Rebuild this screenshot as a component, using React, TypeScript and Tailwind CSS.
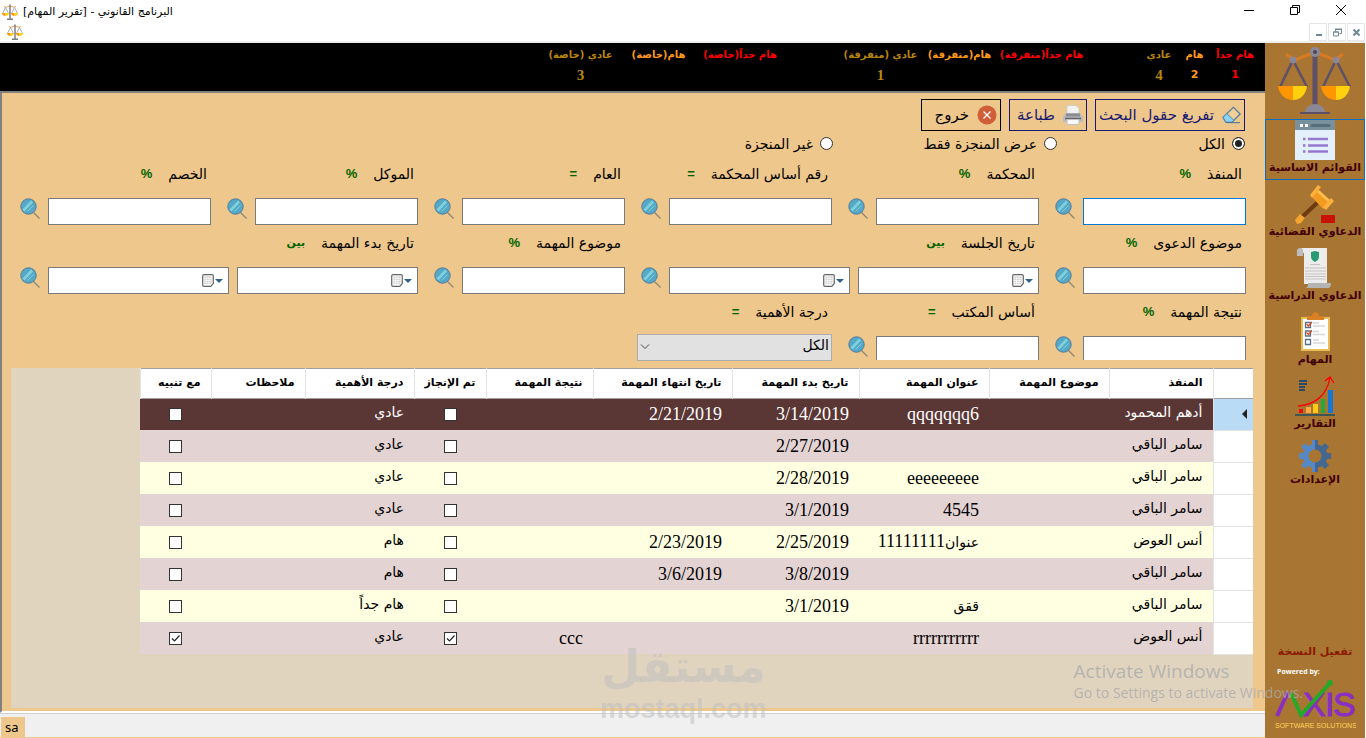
import React from 'react';

interface Counter {
  label: string;
  value: string;
  labelClass: string;
  valueClass: string;
}

interface Task {
  executor: string;
  title: string;
  start: string;
  end: string;
  result: string;
  done: boolean;
  priority: string;
  alert: boolean;
}

const red = 'text-[#ff0000]';
const orange = 'text-[#ff9a1a]';
const gold = 'text-[#b8860b]';

const counterGroups: Counter[][] = [
  [
    { label: 'هام جداً', value: '1', labelClass: `w-[36px] ${red}`, valueClass: `text-[11px] ${red}` },
    { label: 'هام', value: '2', labelClass: `w-[17px] ${orange}`, valueClass: `text-[11px] ${orange}` },
    { label: 'عادي', value: '4', labelClass: `w-[26px] ${gold}`, valueClass: `font-['Liberation_Serif'] text-[15px] ${gold}` },
  ],
  [
    { label: 'هام جداً(متفرقة)', value: '', labelClass: `w-[79px] ${red}`, valueClass: '' },
    { label: 'هام(متفرقة)', value: '', labelClass: `w-[57px] ${orange}`, valueClass: '' },
    { label: 'عادي (متفرقة)', value: '1', labelClass: `w-[73px] ${gold}`, valueClass: `font-['Liberation_Serif'] text-[15px] ${gold}` },
  ],
  [
    { label: 'هام جداً(خاصة)', value: '', labelClass: `w-[78px] ${red}`, valueClass: '' },
    { label: 'هام(خاصة)', value: '', labelClass: `w-[57px] ${orange}`, valueClass: '' },
    { label: 'عادي (خاصة)', value: '3', labelClass: `w-[71px] ${gold}`, valueClass: `font-['Liberation_Serif'] text-[15px] ${gold}` },
  ],
];

const columns = [
  { label: 'المنفذ', width: 'w-[104px]' },
  { label: 'موضوع المهمة', width: 'w-[120px]' },
  { label: 'عنوان المهمة', width: 'w-[130px]' },
  { label: 'تاريخ بدء المهمة', width: 'w-[127px]' },
  { label: 'تاريخ انتهاء المهمة', width: 'w-[139px]' },
  { label: 'نتيجة المهمة', width: 'w-[107px]' },
  { label: 'تم الإنجاز', width: 'w-[72px]' },
  { label: 'درجة الأهمية', width: 'w-[109px]' },
  { label: 'ملاحظات', width: 'w-[94px]' },
  { label: 'مع تنبيه', width: 'w-[71px]' },
];

const tasks: Task[] = [
  { executor: 'أدهم المحمود', title: 'qqqqqqq6', start: '3/14/2019', end: '2/21/2019', result: '', done: false, priority: 'عادي', alert: false },
  { executor: 'سامر الباقي', title: '', start: '2/27/2019', end: '', result: '', done: false, priority: 'عادي', alert: false },
  { executor: 'سامر الباقي', title: 'eeeeeeeee', start: '2/28/2019', end: '', result: '', done: false, priority: 'عادي', alert: false },
  { executor: 'سامر الباقي', title: '4545', start: '3/1/2019', end: '', result: '', done: false, priority: 'عادي', alert: false },
  { executor: 'أنس العوض', title: 'عنوان11111111', start: '2/25/2019', end: '2/23/2019', result: '', done: false, priority: 'هام', alert: false },
  { executor: 'سامر الباقي', title: '', start: '3/8/2019', end: '3/6/2019', result: '', done: false, priority: 'هام', alert: false },
  { executor: 'سامر الباقي', title: 'ققق', start: '3/1/2019', end: '', result: '', done: false, priority: 'هام جداً', alert: false },
  { executor: 'أنس العوض', title: 'rrrrrrrrrrr', start: '', end: '', result: 'ccc', done: true, priority: 'عادي', alert: true },
];

const ScalesIcon = ({ className }: { className: string }) => (
  <svg viewBox="0 0 74 68" className={className}>
    <path d="M8 8l9 6 20-8 20 8 8-6" fill="none" stroke="#d97a25" strokeWidth="3" />
    <path d="M15 14L2 41M15 14l14 27M58 14L45 41M58 14l14 27" fill="none" stroke="#5d5068" strokeWidth="2.5" />
    <path d="M37 5v55" stroke="#5d5068" strokeWidth="5" />
    <path d="M0 40h15v14C7 54 1 48 0 40zM43 40h15v14c-8 0-14-6-15-14z" fill="#ff9500" />
    <path d="M15 40h14c-1 8-6 14-14 14zM58 40h14c-1 8-6 14-14 14z" fill="#ffd00d" />
    <circle cx="37" cy="6" r="5" fill="#8a8896" />
    <circle cx="37" cy="6" r="2" fill="#4d4556" />
    <circle cx="15" cy="14" r="3.5" fill="#8a8896" />
    <circle cx="58" cy="14" r="3.5" fill="#8a8896" />
    <path d="M27 66c1-5 5-8 10-8s9 3 10 8z" fill="#8a8896" />
    <path d="M22 67h30" stroke="#5d5068" strokeWidth="2" />
  </svg>
);

const SmallScalesIcon = ({ className }: { className: string }) => (
  <svg viewBox="0 0 16 16" className={className}>
    <path d="M2 2.500l2 .8 4-1.500 4 1.500 2-.8" fill="none" stroke="#e8a55c" />
    <path d="M3.500 3.500l-3 6M3.500 3.500l3 6M12.500 3.500l-3 6M12.500 3.500l3 6" stroke="#8f8f96" strokeWidth=".7" />
    <path d="M8 .5v14M5 15.300h6" stroke="#7d7d84" strokeWidth="1.500" />
    <path d="M0 9h3.500v3C1.500 12 .3 11 0 9zM9 9h3.500v3c-2 0-3.200-1-3.500-3z" fill="#ff9500" />
    <path d="M3.500 9H7c-.3 2-1.500 3-3.500 3zM12.500 9H16c-.3 2-1.500 3-3.500 3z" fill="#ffd00d" />
  </svg>
);

const ListIcon = () => (
  <svg viewBox="0 0 40 40" className="h-10 w-10">
    <path d="M0 0h40v40H0z" fill="#e3f0fb" />
    <path d="M0 0h40v10H0z" fill="#78919c" />
    <path d="M5 4h3v3H5zM10 4h3v3h-3z" fill="#fff" />
    <path d="M17 5.500h17" stroke="#546e7a" strokeWidth="3" strokeLinecap="round" />
    <path d="M13 19h20M13 25.500h20M13 31.500h20M8 19h2.500M8 25.500h2.500M8 31.500h2.500" stroke="#9678cf" strokeWidth="2.600" />
  </svg>
);

const GavelIcon = () => (
  <svg viewBox="0 0 40 40" className="h-10 w-10">
    <path d="M5 35L23 18" stroke="#6d3a12" strokeWidth="4" />
    <path d="M0 36l5-6 5 4-4 5-4 1z" fill="#f7a531" />
    <path d="M26 31h14v8H26z" fill="#c81408" />
    <path d="M20 5l15 14-7 6-12-13z" fill="#f39a20" />
    <path d="M23 7l11 10" stroke="#ffbe4d" strokeWidth="3" />
    <path d="M15 11l8-10 3 2-9 11zM28 23l8-9 3 3-8 9z" fill="#ffb03a" />
  </svg>
);

const ScrollIcon = () => (
  <svg viewBox="0 0 40 40" className="h-10 w-10">
    <path d="M6 0h26v36H9V6z" fill="#ececec" />
    <path d="M6 0C1 0 2 3 2 8h6V4c0-2 0-4-2-4z" fill="#bdbdbd" />
    <path d="M13 35h23c0 3-1 5-3 5H10c3 0 3-3 3-5z" fill="#b4b4b4" />
    <path d="M16 4l4-1 4 1v5c0 2-2 4-4 5-2-1-4-3-4-5z" fill="#279a74" />
    <path d="M15 16.500h10M10 20h21M10 23h21M10 26h21M10 28.500h21M10 31h21" stroke="#c4c4c4" strokeWidth="1.200" />
  </svg>
);

const ClipboardIcon = () => (
  <svg viewBox="0 0 40 40" className="h-10 w-10">
    <path d="M6 5h29v34H6z" fill="#e7bd55" />
    <path d="M8 7h25v30H8z" fill="#fff" />
    <path d="M12 8V4h5c0-5 7-5 7 0h5v4z" fill="#d98024" />
    <path d="M10.500 10.500h5v5h-5zM10.500 19h5v5h-5zM10.500 27.500h5v5h-5z" fill="none" stroke="#59718b" strokeWidth="1.300" />
    <path d="M11.500 12l2 2 3.500-4M11.500 20.500l2 2 3.500-4" fill="none" stroke="#e0431b" strokeWidth="1.200" />
    <path d="M18 11h6M18 14h12M18 19.500h6M18 22.500h12M18 28h6M18 31h12" stroke="#d6d6d6" strokeWidth="1.300" />
  </svg>
);

const ChartIcon = () => (
  <svg viewBox="0 0 40 40" className="h-10 w-10">
    <path d="M4 33h4v4H4z" fill="#f00a0a" />
    <path d="M11 31h5v6h-5z" fill="#ffa940" />
    <path d="M18 28h5v9h-5z" fill="#ffcc14" />
    <path d="M26 23h4v14h-4z" fill="#24aa35" />
    <path d="M33 14h5v23h-5z" fill="#1976d2" />
    <path d="M0 39h40" stroke="#184c62" strokeWidth="1.500" />
    <path d="M4 5h8M4 8h8M4 11h6M4 14h6" stroke="#2b4a66" strokeWidth="2" />
    <path d="M3 30C18 29 32 21 35 1M30 5l5-4 4 6" fill="none" stroke="#f00" strokeWidth="1.300" />
  </svg>
);

const GearIcon = () => (
  <svg viewBox="0 0 32 32" className="h-8 w-8">
    <path d="M16 0h-3v4.500L9 6 6 3 2 7l3 3-1 3H0v6h4l1 3-3 3 4 4 3-3 4 1.500V32h3z" fill="#5588c4" />
    <path d="M16 0h3v4.500l4 1.500 3-3 4 4-3 3 1 3h4v6h-4l-1 3 3 3-4 4-3-3-4 1.500V32h-3z" fill="#44678f" />
    <circle cx="16" cy="16" r="6.500" fill="#a87632" />
  </svg>
);

const SearchIcon = () => (
  <svg viewBox="0 0 20 21" className="h-[21px] w-5">
    <path d="M13.500 14.500l6 6" stroke="#8d8475" strokeWidth="1.300" />
    <circle cx="8.500" cy="8.500" r="7.700" fill="#56a9c6" stroke="#54799a" />
    <path d="M3.500 12.500l8.500-9" stroke="#7fd1dd" strokeWidth="2.600" />
    <path d="M7.500 13.500l6-6" stroke="#7fd1dd" strokeWidth="1" />
  </svg>
);

const EraserIcon = () => (
  <svg viewBox="0 0 20 18" className="h-[18px] w-5">
    <path d="M1 11.500L12 1l7 7-8.500 8.500H4z" fill="#f0cf9c" stroke="#55799b" strokeWidth="1.300" />
    <path d="M1 11.500L5 7.500l7.500 7-2 2H4z" fill="#8ad4fb" stroke="#55799b" />
    <path d="M5 17h14" stroke="#55799b" strokeWidth="1.200" />
  </svg>
);

const PrinterIcon = () => (
  <svg viewBox="0 0 20 20" className="h-5 w-5">
    <path d="M4 .5h9l3 3V9H4z" fill="#f2f2f2" stroke="#cfcfcf" />
    <path d="M3 8h14l3 4v5H0v-5z" fill="#b9bbbf" />
    <path d="M3 8.500h14v3H3z" fill="#8b8e92" />
    <path d="M2 13.500h16" stroke="#5f6266" strokeWidth="1.500" />
    <path d="M4 14.500h12v5H4z" fill="#f7f7f7" stroke="#c2c2c2" />
  </svg>
);

const CloseIcon = () => (
  <svg viewBox="0 0 20 20" className="h-5 w-5">
    <circle cx="10" cy="10" r="9.500" fill="#cf5f38" />
    <path d="M6.500 6.500l7 7M13.500 6.500l-7 7" stroke="#fff" strokeWidth="1.200" />
  </svg>
);

const CalendarIcon = () => (
  <svg viewBox="0 0 12 13" className="h-[13px] w-3">
    <path d="M2 .7h8q1.300 0 1.300 1.300v7.500l-2.500 2.800H2Q.7 12.300.7 11V2Q.7.7 2 .7z" fill="#fafafa" stroke="#666" strokeWidth="1.200" />
    <path d="M2.500 2.500h7v6l-1 1.500h-6z" fill="#cfcfcf" />
    <path d="M2.500 4.500h7M2.500 6.500h7M2.500 8.500h6M4.500 2.500v7.500M7 2.500v7.500" stroke="#fff" strokeWidth=".7" />
  </svg>
);

const navItems = [
  { label: 'القوائم الاساسية', icon: <ListIcon />, className: 'h-[61px] border border-[#0a6fc2]' },
  { label: 'الدعاوي القضائية', icon: <GavelIcon />, className: 'mt-1' },
  { label: 'الدعاوي الدراسية', icon: <ScrollIcon />, className: 'mt-2' },
  { label: 'المهام', icon: <ClipboardIcon />, className: 'mt-2' },
  { label: 'التقارير', icon: <ChartIcon />, className: 'mt-2' },
  { label: 'الإعدادات', icon: <GearIcon />, className: 'mt-2' },
];

const Sidebar = () => (
  <aside className="flex w-[101px] shrink-0 flex-col items-center border-r border-r-white bg-[#a87632] pt-[3px]">
    <ScalesIcon className="h-[68px] w-[74px]" />
    <nav className="mt-[5px] flex w-full flex-col">
      {navItems.map((item) => (
        <button
          key={item.label}
          className={`flex flex-col items-center text-[11px] leading-4 font-bold whitespace-nowrap text-[#400000] ${item.className}`}
        >
          {item.icon}
          {item.label}
        </button>
      ))}
    </nav>
    <a href="#activate" className="mt-auto text-[11px] leading-5 font-bold whitespace-nowrap text-[#8b1a00]">
      تفعيل النسخة
    </a>
    <div dir="ltr" className="mt-1 w-full pl-3 font-['Open_Sans'] text-[7px] leading-3 font-bold text-white">
      Powered by:
    </div>
    <svg viewBox="0 0 82 52" className="mb-2 h-[52px] w-[82px]" direction="ltr">
      <path d="M3 38L14 14" fill="none" stroke="#8a2fc0" strokeWidth="4" />
      <g fontFamily="Liberation Sans" fontSize="34" fill="#8a2fc0" stroke="#8a2fc0">
        <text x="29" y="38">X</text>
        <text x="51" y="38">I</text>
        <text x="59" y="38">S</text>
      </g>
      <path d="M17 15l10 22L56 5" fill="none" stroke="#27a827" strokeWidth="4" />
      <circle cx="56" cy="5" r="3" fill="#27a827" />
      <text x="1" y="50" fontFamily="Liberation Sans" fontSize="7" fill="#ffd35c">SOFTWARE SOLUTIONS</text>
    </svg>
  </aside>
);

const TitleBar = () => (
  <header dir="ltr" className="h-[43px] border-b-2 border-[#eeeeee] bg-white">
    <div className="flex h-[23px] items-center">
      <SmallScalesIcon className="ml-[2px] h-4 w-4" />
      <h1 dir="rtl" className="ml-[5px] text-[11px] leading-4 text-black">
        البرنامج القانوني - [تقرير المهام]
      </h1>
      <div className="mr-[2px] ml-auto flex h-5 self-start text-black">
        <button aria-label="تصغير" className="flex w-[46px] items-center justify-center">
          <svg viewBox="0 0 10 10" className="h-[10px] w-[10px]"><path d="M0 5.500h10" stroke="currentColor" /></svg>
        </button>
        <button aria-label="استعادة" className="flex w-[46px] items-center justify-center">
          <svg viewBox="0 0 10 10" className="h-[10px] w-[10px]" fill="none" stroke="currentColor"><path d="M.5 2.500h7v7h-7zM2.500 2.500v-2h7v7h-2" /></svg>
        </button>
        <button aria-label="إغلاق" className="flex w-[46px] items-center justify-center">
          <svg viewBox="0 0 10 10" className="h-[10px] w-[10px]"><path d="M0 0l10 10M10 0L0 10" stroke="currentColor" /></svg>
        </button>
      </div>
    </div>
    <div className="flex h-[18px] items-center justify-between">
      <SmallScalesIcon className="ml-[7px] h-4 w-4" />
      <div className="mr-px flex gap-px text-[#6f8796]">
        <button aria-label="تصغير النافذة" className="flex h-[18px] w-[18px] items-center justify-center border border-[#e6e6e6]">
          <svg viewBox="0 0 9 9" className="h-[9px] w-[9px]"><path d="M2 7h6" stroke="currentColor" strokeWidth="2" /></svg>
        </button>
        <button aria-label="استعادة النافذة" className="flex h-[18px] w-[18px] items-center justify-center border border-[#e6e6e6]">
          <svg viewBox="0 0 9 9" className="h-[9px] w-[9px]" fill="none" stroke="currentColor"><path d="M.5 4h5v4h-5zM2.500 3.500v-2h6v4h-2M2 1h7M0 4h6" /></svg>
        </button>
        <button aria-label="إغلاق النافذة" className="flex h-[18px] w-[18px] items-center justify-center border border-[#e6e6e6]">
          <svg viewBox="0 0 9 9" className="h-[9px] w-[9px]"><path d="M1.500 1.500l6 6M7.500 1.500l-6 6" stroke="currentColor" strokeWidth="2" /></svg>
        </button>
      </div>
    </div>
  </header>
);

const CounterBar = () => (
  <div className="flex h-12 gap-[65px] bg-black pr-3">
    {counterGroups.map((group, i) => (
      <div key={i} className="flex gap-[14px] text-center font-bold">
        {group.map((counter) => (
          <div key={counter.label} className="flex flex-col items-center">
            <div className={`flex h-[23px] items-center justify-center text-[10px] whitespace-nowrap ${counter.labelClass}`}>
              {counter.label}
            </div>
            <div className={`leading-[18px] ${counter.valueClass}`}>{counter.value}</div>
          </div>
        ))}
      </div>
    ))}
  </div>
);

interface FieldProps {
  id: string;
  label: string;
  op: string;
  kind?: 'text' | 'dates';
  focused?: boolean;
  cut?: boolean;
}

const FieldLabel = ({ id, label, op, className }: { id: string; label: string; op: string; className: string }) => (
  <div className={`flex items-center gap-4 pr-1 ${className}`}>
    <label htmlFor={id} className="text-[14px] leading-5 whitespace-nowrap text-black">{label}</label>
    <span className={`leading-4 font-bold text-[#006400] ${op === 'بين' ? 'text-[11px]' : "font-['Liberation_Sans'] text-[13px]"}`}>
      {op}
    </span>
  </div>
);

const DateBox = ({ id, label }: { id: string; label: string }) => (
  <div className="flex h-[27px] min-w-0 flex-1 items-center border border-[#7a7a7a] bg-white pr-[5px]">
    <button type="button" aria-label={label} className="flex items-center gap-px">
      <svg viewBox="0 0 8 4" className="h-1 w-2"><path d="M0 0h8L4 4z" fill="#2f5f8f" /></svg>
      <CalendarIcon />
    </button>
    <input id={id} aria-label={label} className="w-full min-w-0 bg-transparent px-1 text-[14px] outline-none" />
  </div>
);

const Field = ({ id, label, op, kind = 'text', focused, cut }: FieldProps) => (
  <div className={kind === 'dates' ? 'col-span-2' : ''}>
    <FieldLabel id={id} label={label} op={op} className="h-[42px] pb-[6px]" />
    <div className="flex items-start gap-2">
      {kind === 'dates' ? (
        <>
          <DateBox id={id} label={`${label} من`} />
          <DateBox id={`${id}-to`} label={`${label} إلى`} />
        </>
      ) : (
        <input
          id={id}
          className={`min-w-0 flex-1 border bg-white px-1 text-[14px] outline-none ${cut ? 'h-6 border-b-0' : 'h-[27px]'} ${
            focused ? 'border-[#0078d7]' : 'border-[#7a7a7a]'
          }`}
        />
      )}
      <button type="button" aria-label={`بحث ${label}`} className="shrink-0">
        <SearchIcon />
      </button>
    </div>
  </div>
);

const Radio = ({ label, checked, className }: { label: string; checked?: boolean; className: string }) => (
  <label className={`flex items-center gap-[7px] text-[14px] leading-5 whitespace-nowrap text-black ${className}`}>
    <input
      type="radio"
      name="status"
      defaultChecked={checked}
      className="h-[13px] w-[13px] shrink-0 appearance-none rounded-full border border-[#333333] bg-white checked:bg-[#222222] checked:shadow-[inset_0_0_0_2px_white]"
    />
    {label}
  </label>
);

const Filters = () => (
  <form className="pr-[19px] pl-[18px]" onSubmit={(e) => e.preventDefault()}>
    <div className="flex gap-2 pr-px">
      <button type="button" className="flex h-8 w-[150px] items-center gap-2 border border-[#191970] px-[3px] text-[15px] whitespace-nowrap text-[#191970]">
        <EraserIcon />
        تفريغ حقول البحث
      </button>
      <button type="button" className="flex h-8 w-[78px] items-center gap-2 border border-[#191970] px-[3px] text-[15px] whitespace-nowrap text-[#191970]">
        <PrinterIcon />
        طباعة
      </button>
      <button type="button" className="flex h-8 w-20 items-center gap-2 border border-black px-[3px] text-[15px] whitespace-nowrap text-black">
        <CloseIcon />
        خروج
      </button>
    </div>
    <div className="flex h-[25px] pr-px">
      <Radio label="الكل" checked className="w-[188px]" />
      <Radio label="عرض المنجزة فقط" className="w-[224px]" />
      <Radio label="غير المنجزة" className="" />
    </div>
    <div className="grid grid-cols-6 gap-x-4">
      <Field id="executor" label="المنفذ" op="%" focused />
      <Field id="court" label="المحكمة" op="%" />
      <Field id="court-base" label="رقم أساس المحكمة" op="=" />
      <Field id="year" label="العام" op="=" />
      <Field id="client" label="الموكل" op="%" />
      <Field id="opponent" label="الخصم" op="%" />
      <Field id="case-subject" label="موضوع الدعوى" op="%" />
      <Field id="session-date" label="تاريخ الجلسة" op="بين" kind="dates" />
      <Field id="task-subject" label="موضوع المهمة" op="%" />
      <Field id="task-start" label="تاريخ بدء المهمة" op="بين" kind="dates" />
      <Field id="task-result" label="نتيجة المهمة" op="%" cut />
      <Field id="office-base" label="أساس المكتب" op="=" cut />
      <div>
        <FieldLabel id="priority" label="درجة الأهمية" op="=" className="h-[39px] pb-1" />
        <div className="relative w-[195px]">
          <select id="priority" className="h-[27px] w-full appearance-none border border-[#adadad] bg-[#e1e1e1] pr-[2px] pb-1 text-[14px] leading-5 text-black">
            <option>الكل</option>
            <option>عادي</option>
            <option>هام</option>
          </select>
          <svg viewBox="0 0 10 6" className="pointer-events-none absolute top-[11px] left-[3px] h-[6px] w-[10px]" fill="none">
            <path d="M1 .5l4 4 4-4" stroke="#444" />
          </svg>
        </div>
      </div>
    </div>
  </form>
);

const CheckCell = ({ label, checked }: { label: string; checked: boolean }) => (
  <td>
    <span className="relative mx-auto block h-[13px] w-[13px]">
      <input
        type="checkbox"
        aria-label={label}
        defaultChecked={checked}
        className="peer block h-[13px] w-[13px] appearance-none border border-[#333333] bg-white"
      />
      <svg viewBox="0 0 13 13" className="pointer-events-none absolute inset-0 hidden h-[13px] w-[13px] peer-checked:block" fill="none">
        <path d="M3 6.500l2.500 2.500L10.500 3.500" stroke="#222" strokeWidth="1.200" />
      </svg>
    </span>
  </td>
);

const TasksTable = () => (
  <table className="w-[1113px] table-fixed border-collapse text-right text-black">
    <thead>
      <tr className="h-[30px] border-y border-[#a0a0a0] bg-white text-[11px]">
        <th className="w-10 border-l border-l-[#e3e3e3]" aria-label="السطر" />
        {columns.map((column) => (
          <th key={column.label} className={`border-l border-l-[#e3e3e3] pr-[10px] font-bold whitespace-nowrap ${column.width}`}>
            {column.label}
          </th>
        ))}
      </tr>
    </thead>
    <tbody className="font-['Liberation_Serif','DejaVu_Sans',serif] text-[18px] leading-6">
      {tasks.map((task, i) => {
        const selected = i === 0;
        const rowColor = selected ? 'bg-[#5a3735] text-white' : i % 2 === 1 ? 'bg-[#e4d3d3]' : 'bg-[#ffffe1]';
        return (
          <tr key={i} className={`h-8 ${rowColor}`}>
            <td className={`border-b border-l border-[#e3e3e3] pr-[6px] ${selected ? 'bg-[#b9dbf5]' : 'bg-white'}`}>
              {selected && (
                <svg viewBox="0 0 5 10" className="h-[10px] w-[5px]"><path d="M5 0v10L0 5z" fill="#222" /></svg>
              )}
            </td>
            <td className="pr-[10px] pb-1 font-['DejaVu_Sans'] text-[14px] whitespace-nowrap">{task.executor}</td>
            <td />
            <td className="pr-[10px] pb-px whitespace-nowrap">
              {/^[\u0600-\u06ff]/.test(task.title) ? (
                <>
                  <span className="text-[14px]">{task.title.replace(/\d/g, '')}</span>
                  {task.title.replace(/\D/g, '')}
                </>
              ) : (
                task.title
              )}
            </td>
            <td className="pr-[10px] pb-px">{task.start}</td>
            <td className="pr-[10px] pb-px">{task.end}</td>
            <td className="pr-[10px] pb-px">{task.result}</td>
            <CheckCell label="تم الإنجاز" checked={task.done} />
            <td className="pr-[10px] pb-1 font-['DejaVu_Sans'] text-[14px]">{task.priority}</td>
            <td />
            <CheckCell label="مع تنبيه" checked={task.alert} />
          </tr>
        );
      })}
    </tbody>
  </table>
);

const App: React.FC = () => (
  <div dir="rtl" className="relative flex min-h-screen flex-col overflow-hidden bg-white font-['DejaVu_Sans',sans-serif]">
    <TitleBar />
    <div className="flex flex-1">
      <Sidebar />
      <div className="flex min-w-0 flex-1 flex-col">
        <CounterBar />
        <main className="flex flex-1 flex-col border-2 border-t-[#808080] border-r-0 border-b-white border-l-[#808080] bg-[#eec78c] pt-[6px] pb-[3px]">
          <Filters />
          <div className="mt-[7px] mr-3 ml-[9px] flex-1 bg-[#e1d4bf]">
            <TasksTable />
          </div>
        </main>
        <footer dir="ltr" className="flex h-[25px] border-t border-b border-t-[#d0d0d0] border-b-[#eec78c] bg-[#f0f0f0] pt-[3px]">
          <span className="ml-px h-5 w-6 bg-[#eec78c] px-1 font-['Noto_Sans'] text-[13px] leading-5 text-black">sa</span>
        </footer>
      </div>
    </div>

    {/* desktop overlays */}
    <div className="pointer-events-none absolute bottom-[14px] left-[600px] text-center font-bold text-[#bdbdbd]/50">
      <div className="text-[45px] leading-[54px]">مستقل</div>
      <div dir="ltr" className="font-['Liberation_Sans'] text-[27px] leading-[30px]">mostaql.com</div>
    </div>
    <div dir="ltr" className="pointer-events-none absolute right-[63px] bottom-[35px] font-['Open_Sans'] text-[#aaaaaa]/80">
      <div className="text-[19px] leading-6">Activate Windows</div>
      <div className="text-[14px] leading-5">Go to Settings to activate Windows.</div>
    </div>
  </div>
);

export default App;
